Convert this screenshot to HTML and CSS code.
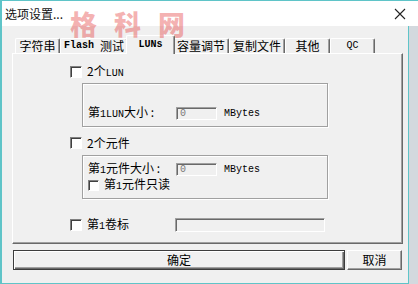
FILE: index.html
```html
<!DOCTYPE html>
<html lang="zh">
<head>
<meta charset="utf-8">
<title>选项设置</title>
<link rel="stylesheet" href="styles.css">
</head>
<body>
<div class="window">
  <div class="titlebar">
    <span class="title">选项设置...</span>
    <svg class="close" width="12" height="12" viewBox="0 0 12 12"><path d="M1 1L11 11M11 1L1 11" stroke="#222" stroke-width="1.1" fill="none"/></svg>
  </div>
  <div class="client">
    <div class="dialog">
      <div class="tabs">
        <div class="tab">字符串</div>
        <div class="tab"><span class="lat b">Flash </span>测试</div>
        <div class="tab sel"><span class="lat b">LUNs</span></div>
        <div class="tab">容量调节</div>
        <div class="tab">复制文件</div>
        <div class="tab">其他</div>
        <div class="tab"><span class="lat">QC</span></div>
      </div>
      <div class="panel">
        <div class="chkrow first"><span class="chk"></span><span class="ctext">2个<span class="lat">LUN</span></span></div>
        <div class="group g1">
          <div class="frow"><span class="flabel">第<span class="lat">1LUN</span>大小 :</span><span class="edit">0</span><span class="unit lat">MBytes</span></div>
        </div>
        <div class="chkrow second"><span class="chk"></span><span class="ctext">2个元件</span></div>
        <div class="group g2">
          <div class="frow"><span class="flabel">第<span class="lat">1</span>元件大小 :</span><span class="edit">0</span><span class="unit lat">MBytes</span></div>
          <div class="chkrow inner"><span class="chk"></span><span class="ctext">第<span class="lat">1</span>元件只读</span></div>
        </div>
        <div class="chkrow third"><span class="lblwrap"><span class="chk"></span><span class="ctext">第<span class="lat">1</span>卷标</span></span><span class="edit wide"></span></div>
      </div>
      <div class="buttons">
        <div class="btn default">确定</div>
        <div class="btn cancel">取消</div>
      </div>
    </div>
    <div class="edge"></div>
  </div>
  <div class="watermark">格科网</div>
</div>
</body>
</html>
```
FILE: styles.css
```css
* { box-sizing: border-box; }
html, body { margin: 0; padding: 0; background: #dde2e6; }
body {
  font-family: "Noto Sans CJK SC", "Liberation Sans", sans-serif;
  font-size: 12px;
  line-height: 12px;
  color: #000;
}
.window {
  position: relative;
  width: 418px;
  height: 284px;
  border-top: 1px solid #5fc4c8;
  border-left: 2px solid #5fc4c8;
  display: flex;
  flex-direction: column;
  overflow: hidden;
}
.titlebar {
  height: 25px;
  background: #fff;
  display: flex;
  align-items: center;
  justify-content: space-between;
  padding: 0 12px 0 3px;
}
.title { font-size: 12px; color: #111; }
.close { display: block; }
.client { flex: 1; display: flex; }
.dialog {
  width: 407px;
  background: #f0f0f0;
  border-right: 1px solid #5fc4c8;
  border-bottom: 1px solid #5fc4c8;
  padding: 9px 5px 0 10px;
}
.edge { flex: 1; background: #d3d9de; }
.lat { font-family: "Liberation Mono", monospace; font-size: 10px; }
.b { font-weight: bold; }

.tabs {
  display: flex;
  align-items: flex-end;
  height: 18px;
  padding-left: 3px;
  position: relative;
  z-index: 1;
}
.tab {
  height: 15px;
  min-width: 45px;
  padding: 0 3px;
  display: flex;
  align-items: center;
  justify-content: center;
  white-space: pre;
  border-top: 1px solid #fff;
  border-left: 1px solid #fff;
  border-right: 1px solid #696969;
  box-shadow: inset -1px 0 #a0a0a0;
  border-radius: 2px 2px 0 0;
  background: #f0f0f0;
}
.tab.sel {
  height: 19px;
  margin: 0 -2px -1px -2px;
  min-width: 49px;
  position: relative;
  z-index: 2;
}
.tab.sel + .tab { border-left-color: #f0f0f0; }

.panel {
  width: 391px;
  height: 191px;
  border-top: 1px solid #fff;
  border-left: 1px solid #fff;
  border-right: 1px solid #696969;
  border-bottom: 1px solid #696969;
  box-shadow: inset -1px -1px #a0a0a0;
  padding-top: 12px;
}
.chkrow {
  display: flex;
  align-items: center;
  height: 12px;
  margin-left: 57px;
}
.chk {
  width: 12px;
  height: 12px;
  flex: none;
  border: 1px solid;
  border-color: #808080 #fff #fff #808080;
  box-shadow: inset 1px 1px #404040;
  background: #fff;
}
.ctext { margin-left: 5px; }
.group {
  margin-left: 69px;
  width: 246px;
  height: 44px;
  border: 1px solid #a0a0a0;
  box-shadow: inset 1px 1px #fff, 1px 1px #fff;
  padding-left: 5px;
}
.g1 { margin-top: 5px; padding-top: 23px; }
.second { margin-top: 10px; }
.g2 { margin-top: 6px; padding-top: 7px; }
.frow { display: flex; align-items: center; height: 13px; }
.flabel { width: 88px; flex: none; }
.edit {
  width: 41px;
  height: 13px;
  flex: none;
  border: 1px solid;
  border-color: #a0a0a0 #fff #fff #a0a0a0;
  box-shadow: inset 1px 1px #696969;
  background: #f0f0f0;
  font-family: "Liberation Mono", monospace;
  font-size: 10px;
  line-height: 11px;
  color: #7a7a7a;
  padding-left: 3px;
}
.unit { margin-left: 7px; }
.chkrow.inner { margin-left: 0; margin-top: 3px; }
.chkrow.inner .chk { width: 11px; height: 11px; }
.third { margin-top: 19px; height: 14px; }
.lblwrap { width: 105px; display: flex; align-items: center; flex: none; }
.edit.wide { width: 150px; height: 14px; }

.buttons {
  display: flex;
  gap: 2px;
  margin-top: 6px;
  padding-left: 1px;
}
.btn {
  height: 20px;
  display: flex;
  align-items: center;
  justify-content: center;
  background: #f0f0f0;
}
.btn.default {
  width: 332px;
  border: 1px solid #3c3c3c;
  box-shadow: inset 1px 1px #fff, inset -1px -1px #696969, inset -2px -2px #a0a0a0;
}
.btn.cancel {
  width: 55px;
  border-top: 1px solid #fff;
  border-left: 1px solid #fff;
  border-right: 1px solid #696969;
  border-bottom: 1px solid #696969;
  box-shadow: inset -1px -1px #a0a0a0;
}
.watermark {
  position: absolute;
  left: 68px;
  top: 9px;
  font-size: 27px;
  line-height: 27px;
  font-weight: 900;
  letter-spacing: 17px;
  color: rgba(228, 50, 50, 0.38);
  pointer-events: none;
  z-index: 5;
}
```
